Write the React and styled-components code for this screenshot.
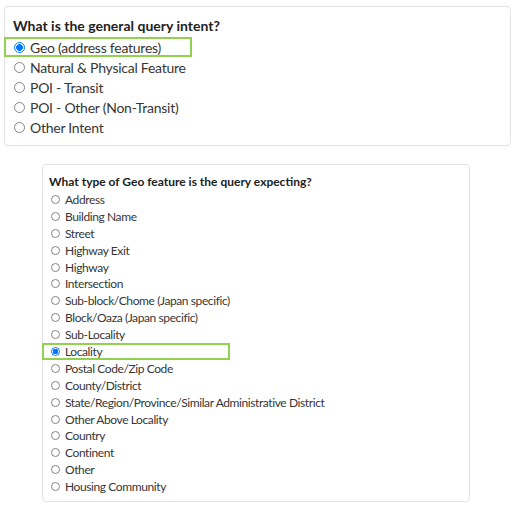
import React from "react";
import styled, { createGlobalStyle } from "styled-components";

const Global = createGlobalStyle`
  html, body { margin: 0; padding: 0; background: #fff; }
  body { font-family: "Lato", "Noto Sans", sans-serif; color: #333; }
`;

const Page = styled.div`
  padding: 6px 7px 0 4px;
  display: flex;
  flex-direction: column;
`;

const Card = styled.div`
  border: 1px solid #e3e3e3;
  border-radius: 4px;
  background: #fff;
  box-sizing: border-box;
  padding: ${(p) => (p.$small ? "8px 6px 6px 6px" : "9px 8px 8px 8px")};
  width: ${(p) => (p.$small ? "428px" : "507px")};
  margin-left: ${(p) => (p.$small ? "38px" : "0")};
  margin-top: ${(p) => (p.$small ? "18px" : "0")};
`;

const Title = styled.div`
  font-weight: 700;
  color: #222;
  font-size: ${(p) => (p.$small ? "12px" : "14px")};
  line-height: ${(p) => (p.$small ? "17px" : "20px")};
`;

const Options = styled.div`
  display: flex;
  flex-direction: column;
  margin-top: 1px;
`;

const Row = styled.label`
  display: flex;
  align-items: center;
  box-sizing: border-box;
  font-size: ${(p) => (p.$small ? "12px" : "14px")};
  letter-spacing: ${(p) => (p.$small ? "-0.4px" : "-0.25px")};
  height: ${(p) => (p.$small ? "16.9px" : "20px")};
  color: #363636;
  margin-left: ${(p) => (p.$small ? "-7px" : "-9px")};
  width: 188px;
  white-space: nowrap;
  border: 2px solid ${(p) => (p.$hl ? "#92d050" : "transparent")};
  border-left-width: ${(p) => (p.$hl ? "2px" : "0")};
  padding-left: ${(p) => (p.$hl ? (p.$small ? "5px" : "7px") : p.$small ? "7px" : "9px")};
`;

const Radio = styled.input.attrs({ type: "radio" })`
  appearance: none;
  -webkit-appearance: none;
  box-sizing: border-box;
  margin: 0 5px 0 ${(p) => (p.$small ? "2px" : "1px")};
  width: ${(p) => (p.$small ? "9px" : "11px")};
  height: ${(p) => (p.$small ? "9px" : "11px")};
  border: 1px solid #858585;
  border-radius: 50%;
  background: #fff;
  flex: none;
  &:checked {
    border-color: #0075ff;
    background: radial-gradient(circle, #0075ff 0 ${(p) => (p.$small ? "2.6px" : "3.1px")}, #fff ${(p) => (p.$small ? "3px" : "3.6px")});
  }
`;

const intents = [
  "Geo (address features)",
  "Natural & Physical Feature",
  "POI - Transit",
  "POI - Other (Non-Transit)",
  "Other Intent",
];

const geo = [
  "Address",
  "Building Name",
  "Street",
  "Highway Exit",
  "Highway",
  "Intersection",
  "Sub-block/Chome (Japan specific)",
  "Block/Oaza (Japan specific)",
  "Sub-Locality",
  "Locality",
  "Postal Code/Zip Code",
  "County/District",
  "State/Region/Province/Similar Administrative District",
  "Other Above Locality",
  "Country",
  "Continent",
  "Other",
  "Housing Community",
];

export default function App() {
  return (
    <Page>
      <Global />
      <Card>
        <Title>What is the general query intent?</Title>
        <Options>
          {intents.map((t, i) => (
            <Row key={t} $hl={i === 0}>
              <Radio name="intent" defaultChecked={i === 0} />
              {t}
            </Row>
          ))}
        </Options>
      </Card>
      <Card $small>
        <Title $small>What type of Geo feature is the query expecting?</Title>
        <Options $small>
          {geo.map((t) => (
            <Row key={t} $small $hl={t === "Locality"}>
              <Radio $small name="geo" defaultChecked={t === "Locality"} />
              {t}
            </Row>
          ))}
        </Options>
      </Card>
    </Page>
  );
}
